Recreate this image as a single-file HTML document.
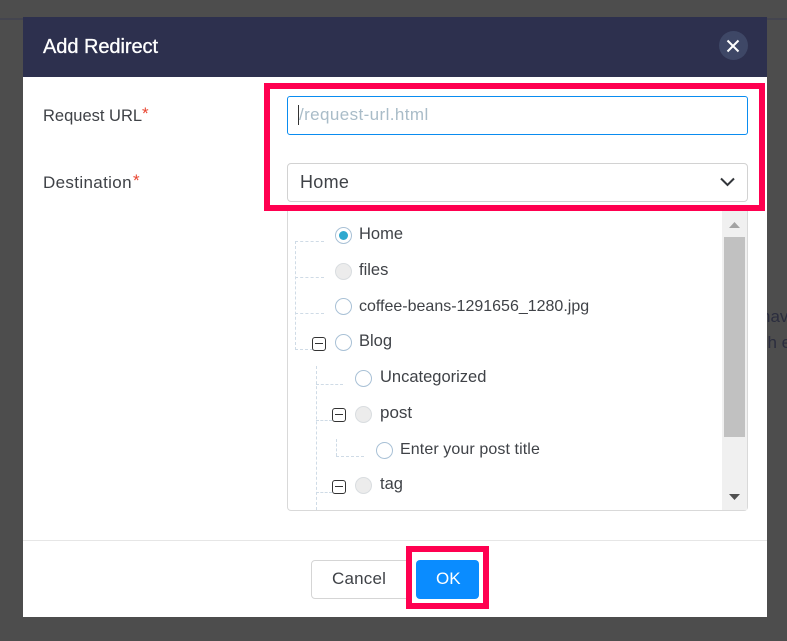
<!DOCTYPE html>
<html>
<head>
<meta charset="utf-8">
<style>
html,body{margin:0;padding:0;width:787px;height:641px;overflow:hidden;background:#4d4d4d;font-family:"Liberation Sans",sans-serif;}
.a{position:absolute;box-sizing:border-box;}
.t{position:absolute;white-space:nowrap;color:#3f4247;font-size:16px;line-height:20px;}
.r{position:absolute;box-sizing:border-box;width:17px;height:17px;border-radius:50%;border:1px solid #a9c1d6;background:#fff;}
.d{background:#ececec;border-color:#d9dde0;}
.m{position:absolute;box-sizing:border-box;width:14px;height:14px;border:1px solid #333;border-radius:3px;background:#fff;}
.m:after{content:"";position:absolute;left:2px;right:2px;top:5px;height:1px;background:#333;}
.h{position:absolute;height:0;border-top:1px dashed #cfdbe6;}
.v{position:absolute;width:0;border-left:1px dashed #cfdbe6;}
</style>
</head>
<body>
<div class="a" style="left:0;top:18px;width:787px;height:2px;background:#44454f;"></div>
<div class="t" style="left:761px;top:307px;color:#2b2d3e;font-size:17px;">hav</div>
<div class="t" style="left:759px;top:333px;color:#2b2d3e;font-size:17px;">ch e</div>

<div class="a" style="left:23px;top:17px;width:744px;height:600px;background:#fff;"></div>
<div class="a" style="left:23px;top:17px;width:744px;height:60px;background:#2d304e;"></div>
<div class="t" style="left:43px;top:36px;font-size:20px;line-height:22px;color:#fff;letter-spacing:-.05px;-webkit-text-stroke:.3px #fff;">Add Redirect</div>
<div class="a" style="left:719px;top:31px;width:29px;height:29px;border-radius:50%;background:#3e4766;"></div>
<svg class="a" style="left:719px;top:31px;" width="29" height="29"><path d="M8.500 9.500L19.500 20.500M19.500 9.500L8.500 20.500" stroke="#fff" stroke-width="2" fill="none"/></svg>

<div class="t" style="left:43px;top:106px;font-size:16.5px;">Request URL</div>
<div class="t" style="left:142px;top:104px;color:#e8442f;font-size:17px;">*</div>
<div class="t" style="left:43px;top:173px;font-size:17px;letter-spacing:.35px;">Destination</div>
<div class="t" style="left:133px;top:171px;color:#e8442f;font-size:17px;">*</div>

<div class="a" style="left:287px;top:96px;width:461px;height:39px;border:1px solid #0a8cf0;border-radius:3px;background:#fff;"></div>
<div class="a" style="left:298px;top:105px;width:1px;height:20px;background:#333;"></div>
<div class="t" style="left:299px;top:105px;font-size:17px;color:#a9bcc8;letter-spacing:.4px;">/request-url.html</div>

<div class="a" style="left:287px;top:163px;width:461px;height:39px;border:1px solid #d2d2d2;border-radius:4px;background:#fff;"></div>
<div class="t" style="left:300px;top:172px;font-size:18px;color:#3f4247;letter-spacing:.3px;">Home</div>
<svg class="a" style="left:720px;top:176px;" width="15" height="12"><path d="M1 2.500L7.500 9L14 2.500" stroke="#33363b" stroke-width="2" fill="none"/></svg>

<div class="a" style="left:264px;top:83px;width:501px;height:128px;border:6px solid #ff0050;"></div>

<div class="a" style="left:287px;top:211px;width:461px;height:300px;border:1px solid #d9d9d9;border-top:0;border-radius:0 0 4px 4px;background:#fff;"></div>
<div class="a" style="left:722px;top:211px;width:25px;height:299px;background:#f0f0f0;"></div>
<div class="a" style="left:724px;top:237px;width:21px;height:200px;background:#c1c1c1;"></div>
<svg class="a" style="left:722px;top:211px;" width="25" height="299"><path d="M7 17L18 17L12.500 11Z" fill="#a3a3a3"/><path d="M7 283L18 283L12.500 289Z" fill="#505050"/></svg>

<div class="v" style="left:295px;top:241px;height:109px;"></div>
<div class="h" style="left:295px;top:241px;width:29px;"></div>
<div class="h" style="left:295px;top:277px;width:29px;"></div>
<div class="h" style="left:295px;top:313px;width:29px;"></div>
<div class="h" style="left:295px;top:349px;width:18px;"></div>
<div class="v" style="left:316px;top:366px;height:144px;"></div>
<div class="h" style="left:316px;top:384px;width:27px;"></div>
<div class="h" style="left:316px;top:420px;width:16px;"></div>
<div class="h" style="left:316px;top:492px;width:16px;"></div>
<div class="v" style="left:336px;top:439px;height:17px;"></div>
<div class="h" style="left:336px;top:456px;width:28px;"></div>

<div class="r" style="left:335px;top:227px;"></div>
<div class="a" style="left:339px;top:231px;width:9px;height:9px;border-radius:50%;background:#2fa9cf;"></div>
<div class="t" style="left:359px;top:224px;font-size:16.500px;">Home</div>
<div class="r d" style="left:335px;top:263px;"></div>
<div class="t" style="left:359px;top:260px;font-size:16.500px;">files</div>
<div class="r" style="left:335px;top:298px;"></div>
<div class="t" style="left:359px;top:297px;">coffee-beans-1291656_1280.jpg</div>
<div class="m" style="left:312px;top:337px;"></div>
<div class="r" style="left:335px;top:334px;"></div>
<div class="t" style="left:359px;top:331px;font-size:16.500px;">Blog</div>
<div class="r" style="left:355px;top:370px;"></div>
<div class="t" style="left:380px;top:367px;font-size:16.500px;">Uncategorized</div>
<div class="m" style="left:332px;top:408px;"></div>
<div class="r d" style="left:355px;top:406px;"></div>
<div class="t" style="left:380px;top:403px;font-size:17px;">post</div>
<div class="r" style="left:376px;top:442px;"></div>
<div class="t" style="left:400px;top:440px;letter-spacing:.1px;">Enter your post title</div>
<div class="m" style="left:332px;top:480px;"></div>
<div class="r d" style="left:355px;top:477px;"></div>
<div class="t" style="left:380px;top:474px;font-size:16.500px;">tag</div>

<div class="a" style="left:23px;top:540px;width:744px;height:1px;background:#e6e6e6;"></div>
<div class="a" style="left:311px;top:560px;width:100px;height:39px;border:1px solid #d5d5d5;border-radius:4px;background:#fff;"></div>
<div class="t" style="left:332px;top:569px;font-size:17px;letter-spacing:.2px;">Cancel</div>
<div class="a" style="left:406px;top:546px;width:83px;height:63px;border:6px solid #ff0050;background:#fff;"></div>
<div class="a" style="left:416px;top:560px;width:63px;height:39px;border-radius:4px;background:#0a8cff;"></div>
<div class="t" style="left:436px;top:569px;font-size:17px;color:#fff;">OK</div>
</body>
</html>
